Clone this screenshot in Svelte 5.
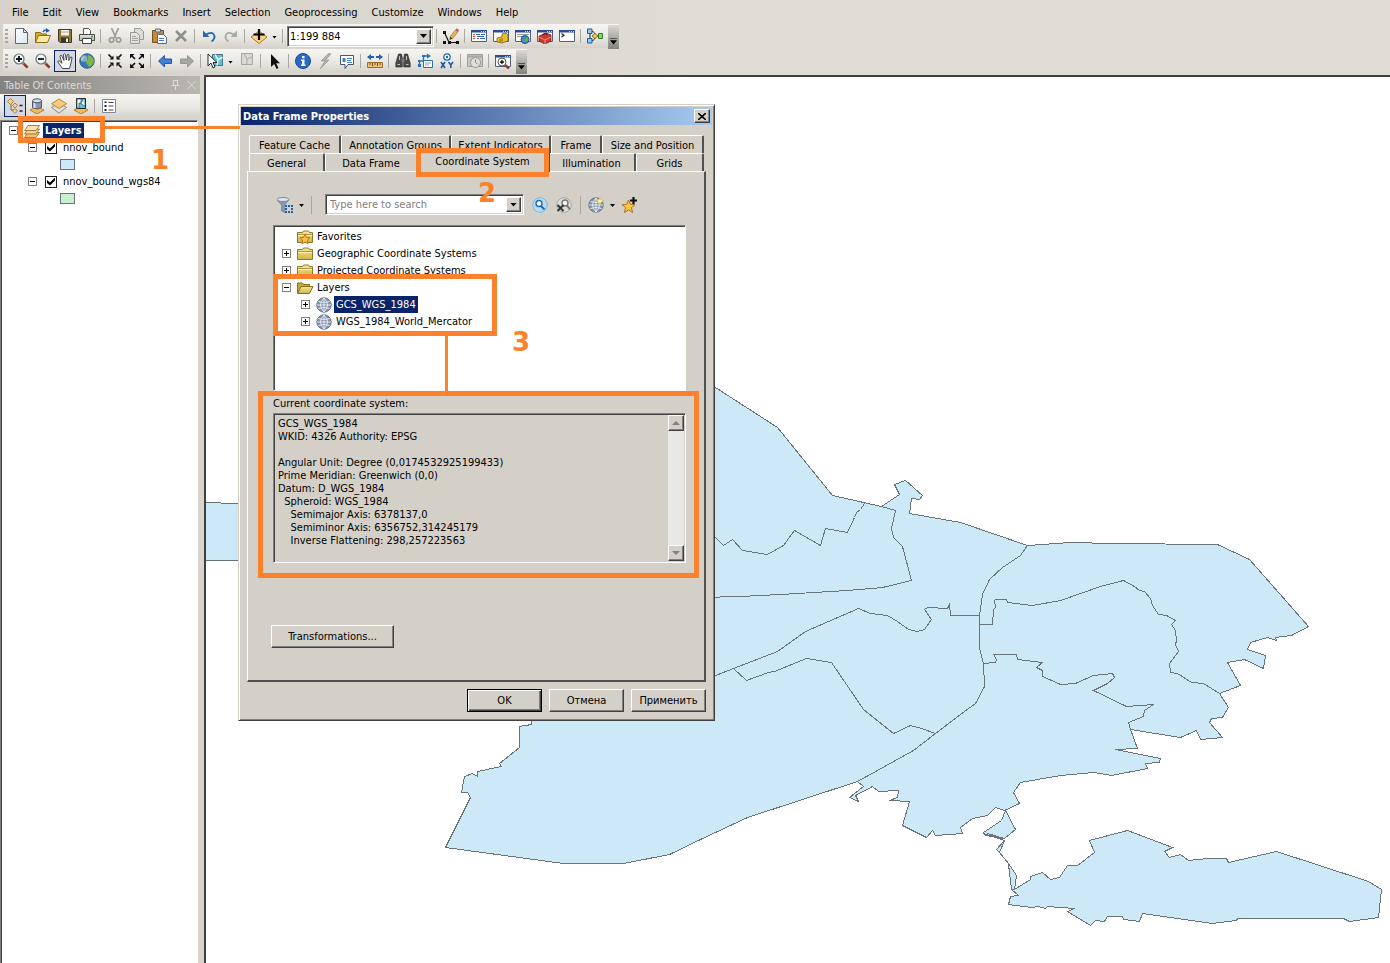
<script>
  const menus = ['File', 'Edit', 'View', 'Bookmarks', 'Insert', 'Selection', 'Geoprocessing', 'Customize', 'Windows', 'Help'];

  const lens = '<circle cx="6" cy="6" r="5" fill="#f2f6fa" stroke="#6d747c" stroke-width="1.2"/><path d="M10 10l4.6 4.6" stroke="#8c3b2a" stroke-width="2.600"/><path d="M9.4 9.4l1.6 1.6" stroke="#888" stroke-width="2"/>';
  const win = '<path d="M0 2h16v12H0z" fill="#fff" stroke="none"/><path d="M.5 2.5h15v11H.5z" fill="none" stroke="#4f5f7d"/><path d="M0 2h16v2.500H0z" fill="#2a4b92"/><path d="M10 3.500h1M12 3.500h1M14 3.500h1" stroke="#c9d6f0"/>';
  const diamond = '<path d="M8 8.5l7 3.5-7 4-7-4z" fill="#f2bd58" stroke="#a07020" stroke-width=".8"/>';
  const globe = '<circle cx="8" cy="8" r="7.2" fill="#8290a5" stroke="#68778e"/><path d="M1 8h14M8 1v14M2.2 4.5q5.8 2 11.6 0M2.2 11.5q5.8-2 11.6 0M8 1q-7 7 0 14M8 1q7 7 0 14" fill="none" stroke="#edf2f8" stroke-width=".9"/>';
  const folder = '<path d="M.5 3.5h5l1-1.5h5l1 1.5h3v10H.5z" fill="url(#manila)" stroke="#8d7a22"/><path d="M1 6.5h14" stroke="#fff2a8"/><path d="M1 5.500h14" stroke="#a18a30" stroke-width=".8"/>';

  const icons = {
    new: '<path d="M2.5.5h8l4 4v11h-12z" fill="url(#paper)" stroke="#56697f"/><path d="M10.500 .5v4h4z" fill="#d5e0ee" stroke="#56697f"/>',
    open: '<path d="M.5 14.500V4.500h5l1 1.500h5v2" fill="#d9a92f" stroke="#8a6a14"/><path d="M.5 14.500l3-7h12l-3 7z" fill="#ffe9a5" stroke="#8a6a14"/><path d="M8 4q1-2.500 4-2" fill="none" stroke="#1d5ca8" stroke-width="1.500"/><path d="M11 0l4 2.700-4 2z" fill="#1d5ca8"/>',
    save: '<path d="M1.500 1.500h13v13H3l-1.500-1.500z" fill="#8f7b35" stroke="#423b2c"/><path d="M4 2h8v5.500H4z" fill="#f3f1e6"/><path d="M4 4h8" stroke="#b9b49c"/><path d="M4 9.500h8V14H4z" fill="#3a3832"/><path d="M9 10.500h2V14H9z" fill="#f0eee2"/>',
    print: '<path d="M4.500 6V.5h5l2 2V6" fill="#fff" stroke="#555"/><path d="M.5 6.500h15v6H.5z" fill="#c6c6bd" stroke="#4c4c4c"/><path d="M1 8h14" stroke="#eee"/><path d="M3.500 10.500h9v5h-9z" fill="#fff" stroke="#444"/><path d="M12 8.500h2" stroke="#34a032" stroke-width="1.500"/>',
    cut: '<path d="M4.500 0l4.500 10M11.500 0L7 10" stroke="#a0a09c" stroke-width="1.800"/><circle cx="4.500" cy="12" r="2.200" fill="none" stroke="#989894" stroke-width="1.600"/><circle cx="11.500" cy="12" r="2.200" fill="none" stroke="#989894" stroke-width="1.600"/>',
    copy: '<path d="M5.500.5h6l3 3v8h-9z" fill="#dddcd7" stroke="#9a9a96"/><path d="M1.500 4.500h6l3 3v8h-9z" fill="#e2e1dc" stroke="#9a9a96"/><path d="M3 8.500h4M3 10.500h6M3 12.500h6" stroke="#a3a39f"/>',
    paste: '<path d="M1.500 2.500h11v12h-11z" fill="#c8893a" stroke="#74501f"/><path d="M4.500 1h5v3h-5z" fill="#d9d9d9" stroke="#666"/><path d="M6.500 6.500h6l3 3v6h-9z" fill="#fff" stroke="#4d6a90"/><path d="M8 10.500h5M8 12.500h5" stroke="#3f77c0"/>',
    del: '<path d="M3 3l10 10M13 3L3 13" stroke="#8d8d89" stroke-width="2.600"/>',
    undo: '<path d="M5 6.500q7-4 8.500 1.500q.5 3-3 5.500" fill="none" stroke="#2767b1" stroke-width="1.800"/><path d="M2 2.500v6.500h6.500z" fill="#2767b1"/>',
    redo: '<path d="M11 6.500Q4 2.500 2.500 8q-.5 3 3 5.500" fill="none" stroke="#a8a8a4" stroke-width="1.800"/><path d="M14 2.500v6.500H7.500z" fill="#a8a8a4"/>',
    add: '<path d="M8 3l8 6-8 6.500L0 9z" fill="#fbd48a" stroke="#a8782a"/><path d="M8 1v11M2.500 6.500h11" stroke="#000" stroke-width="2.200"/>',
    edit: '<path d="M1.500 4.500l4.500 10h8" fill="none" stroke="#111" stroke-width="1.200"/><path d="M0 3h3v3H0zM0 13h3v3H0zM5 13h3v3H5zM13 13h3v3h-3z" fill="#111"/><path d="M7 9l5.500-7 2.500 1.700L9.500 10.500z" fill="#e7bd59" stroke="#8a6a2c" stroke-width=".7"/><path d="M12.500 2l1.200-1.700L16 2l-1 1.700z" fill="#c0524a"/><path d="M7 9l-.5 3 3-1.500z" fill="#333"/>',
    toc: win + '<path d="M2 6.500h2M2 8.500h2M2 10.500h2M6 10.500h2" stroke="#c14a3a"/><path d="M5 6.500h4M10 6.500h4M6 8.500h7M9 10.500h5" stroke="#2d66b8"/>',
    catalog: win + '<path d="M4 10l5-1V6l4-1 2 2v6l-6 2-5-1z" fill="#e8c02e" stroke="#7d6412" stroke-width=".8"/><path d="M6 11l4-1v3.500l-4 1z" fill="#b48e17"/>',
    search: win + '<path d="M2 6.500h12M2 8.500h6" stroke="#999"/><circle cx="10" cy="11.500" r="4" fill="#3b8bc9" stroke="#24518b"/><path d="M7 10q3 3 5-1 2 2 1 4-3 2-4 0z" fill="#5fb04c"/>',
    toolbox: win + '<path d="M2 8l7-3 5 2v6l-6 3-6-3z" fill="#cc3a2e" stroke="#7a1a14" stroke-width=".8"/><path d="M2 9l6 3 6-3M8 12v4" fill="none" stroke="#f0a096" stroke-width=".8"/><path d="M6 7q2-3 4 0" fill="none" stroke="#5a120c" stroke-width="1.200"/>',
    python: win + '<path d="M2.500 5.500l2.500 1.700-2.500 1.800" fill="none" stroke="#222" stroke-width="1.200"/>',
    model: '<path d="M3 5v6M5 3.500q3 0 3 4.500M5 12.500q3 0 3-4.500h3" fill="none" stroke="#222"/><path d="M.5 1h4.500v4.500H.5zM.5 10.500h4.500V15H.5z" fill="#8ccbf2" stroke="#1f5f9e"/><path d="M5 8l3-2.500L11 8l-3 2.500z" fill="#f7d356" stroke="#8a6a14"/><path d="M11.500 5.500h4v5h-4z" fill="#92d36d" stroke="#2e7d26"/>',
    zoomin: lens + '<path d="M6 3v6M3 6h6" stroke="#111" stroke-width="1.800"/>',
    zoomout: lens + '<path d="M3 6h6" stroke="#111" stroke-width="1.800"/>',
    hand: '<path d="M5.500 15.500L1 9.200q-.5-1.700 1.200-1.400L5 10.300 3 3.500q.2-1.700 1.600-1L7 7.500 6.500 1.500q.7-1.500 1.900 0l.9 5.500 1-5.300q1-1 1.700.3l-.3 5.700 1.800-3.500q1.400-.7 1.500.8L13.700 11l-1.200 4.500z" fill="#fff" stroke="#333" stroke-width=".9"/>',
    earth: '<circle cx="8" cy="8" r="7.300" fill="#3279b8" stroke="#274e80" stroke-width=".8"/><path d="M9 2q5 1 6 6-1 5-5 6-1-2-3-4 0-3 2-4-1-2 0-4zM2 6q2-3 4-3-1 3-4 6z" fill="#7fb44e"/><circle cx="5" cy="5.500" r="3.200" fill="#fff" opacity=".4"/>',
    shrink: '<path d="M1.500 1.500l3 3M14.500 1.500l-3 3M1.500 14.500l3-3M14.500 14.500l-3-3" stroke="#111" stroke-width="1.700"/><path d="M6.500 2.500v4h-4zM9.500 2.500v4h4zM6.500 13.500v-4h-4zM9.500 13.500v-4h4z" fill="#111"/>',
    grow: '<path d="M3 3l3 3M13 3l-3 3M3 13l3-3M13 13l-3-3" stroke="#111" stroke-width="1.700"/><path d="M1 5.500V1h4.500zM15 5.500V1h-4.500zM1 10.500V15h4.500zM15 10.500V15h-4.500z" fill="#111"/>',
    back: '<path d="M1.500 8l6-5.500V6h7v4.500h-7V14z" fill="#3f7fd8" stroke="#1b4da0" stroke-width=".9"/>',
    forward: '<path d="M14.500 8l-6-5.500V6h-7v4.500h7V14z" fill="#a6a6a2" stroke="#90908c" stroke-width=".9"/>',
    select: '<path d="M5.500 1.500h10v11h-10z" fill="#58c4d8" stroke="#45707c"/><path d="M8 1.500l3 5 4.500-2M11 6.500l-1 6" fill="none" stroke="#fff" stroke-width="1.400"/><path d="M1 1v12l3-3 2 5 2-1-2-4.500h4z" fill="#fff" stroke="#111" stroke-width=".9"/>',
    clear: '<path d="M2.500.5h11v11h-11z" fill="#dbd9d4" stroke="#a7a6a1"/><path d="M5 1l3 5 5-2M8 6v5" fill="none" stroke="#aaa9a4"/>',
    pointer: '<path d="M4 1v13l3.200-3 2.300 5 2-1-2.300-4.700H13z" fill="#111"/>',
    info: '<circle cx="8" cy="8" r="7.500" fill="#2869c3" stroke="#194a94"/><path d="M7 3h2.500v2.300H7zM6 6.500h3.500v5h1V13H6v-1.500h1V8H6z" fill="#fff"/>',
    bolt: '<path d="M12 0L4 8h4l-5 8 9-9H8.500L14 1z" fill="#b1b0ac" stroke="#8f8e8a" stroke-width=".6"/>',
    popup: '<path d="M1.500 2.500h13v9H9l-3 4v-4H1.500z" fill="#fff" stroke="#47576a"/><path d="M3.500 5h3v4h-3z" fill="#3b80c8"/><path d="M8 5.500h5M8 7.500h4M8 9.500h5" stroke="#3b80c8"/>',
    measure: '<path d="M0 4l4-3v2h3v2H4v2zM16 4l-4-3v2H9v2h3v2z" fill="#1f63ad"/><path d="M.5 9.500h15v5H.5z" fill="#e9bf7a" stroke="#9a6a2a"/><path d="M3 10v2M5.500 10v3M8 10v2M10.500 10v3M13 10v2" stroke="#7b5320"/>',
    find: '<path d="M3.500 1h3l.8 4v9H.8v-4zM12.500 1h-3l-.8 4v9h6.500v-4z" fill="#4a4a4a" stroke="#222" stroke-width=".6"/><path d="M6.500 6h3v3h-3z" fill="#777"/><path d="M2.500 11.500h2.500M11 11.500h2.500M4.500 3v4M11.500 3v4" stroke="#c0c0c0"/>',
    route: '<path d="M2.500 12V8h4V3h5" fill="none" stroke="#2b6fae" stroke-width="1.300"/><path d="M10 .5L14 3l-4 2.500zM1 11h3v3H1zM5 2h3v2H5zM1 7h2v2H1z" fill="#2b6fae"/><path d="M6.500 7.500h9v7h-9z" fill="#fff" stroke="#2b6fae"/><path d="M8 10h6M8 12h4" stroke="#7aa5cf"/>',
    xy: '<circle cx="8" cy="4" r="3.200" fill="#fff" stroke="#1d6cb4" stroke-width="1.300"/><circle cx="8" cy="4" r="1.200" fill="#1d6cb4"/><path d="M2 9l4 6M6 9l-4 6M9.500 9l2.300 3L14 9M11.800 12v3" fill="none" stroke="#1d5ca0" stroke-width="1.600"/>',
    time: '<path d="M.5 1.500h15v12H.5z" fill="#c9c8c4" stroke="#a09f9b"/><path d="M1 3.500h14" stroke="#aaa9a5" stroke-width="2"/><circle cx="8.500" cy="9.500" r="5" fill="#e0dfdb" stroke="#969591"/><path d="M8.500 6.500v3l2 1.500" fill="none" stroke="#8a8985"/>',
    viewer: win + '<circle cx="7" cy="9" r="4" fill="#fff" stroke="#555"/><path d="M7 7v4M5 9h4" stroke="#111" stroke-width="1.300"/><path d="M10 12l4 3.500" stroke="#8c3b2a" stroke-width="2.400"/>',
    byorder: '<path d="M4 4v8h6M6 7.500h4" fill="none" stroke="#8a6a2c"/><path d="M3.500.5L6.500 3.500 3.500 6.500.5 3.500zM8 5l2.500 2.500L8 10 5.500 7.500zM8 10.500l2.500 2.500L8 15.500 5.500 13z" fill="#f6d08a" stroke="#9c7020" stroke-width=".8"/><path d="M12.500 7.500h3M12.500 13h3" stroke="#222" stroke-width="1.500"/>',
    bysource: diamond + '<path d="M3.500 3q4.500-3.500 9 0v6.500q-4.500 3-9 0z" fill="#8998b0" stroke="#4a5870"/><path d="M5.500 4v6" stroke="#d7dfea" stroke-width="2"/><ellipse cx="8" cy="2.800" rx="4.500" ry="2" fill="#d7dfea" stroke="#4a5870"/>',
    byvis: '<path d="M8 5l7.500 4.500L8 15 .5 9.500z" fill="#e4e2dc" stroke="#77756c" stroke-width=".8"/><path d="M8 1l7.500 4.700L8 10.500.5 5.700z" fill="#f7cc7a" stroke="#a07426" stroke-width=".8"/>',
    bysel: diamond + '<path d="M3.500.5h9v10h-9z" fill="#58c4d8" stroke="#222"/><path d="M4 1h4v4H6v5H4zM10 1l-2 5 4 2" fill="#fff" stroke="#385e68" stroke-width=".8"/>',
    options: '<path d="M1.500 1.500h13v13h-13z" fill="#fff" stroke="#7d8898"/><path d="M3.500 3.500h2v1.500h-2zM3.500 7h2v2h-2zM3.500 11h2v2h-2z" fill="#223"/><path d="M7.500 4.500h5M7.500 8h5M7.500 12h5" stroke="#445"/>',
    layers: '<path d="M4 9.500h11.500l-3.500 5H.5z" fill="#f0c074" stroke="#8a6426" stroke-width=".8"/><path d="M4 6h11.500l-3.500 5H.5z" fill="#f6d193" stroke="#8a6426" stroke-width=".8"/><path d="M4 2.500h11.500l-3.500 5H.5z" fill="#fbe0b0" stroke="#8a6426" stroke-width=".8"/>',
    filter: '<path d="M0 3l4.500 5v6l3 1.500V8L12 3q-6 2.500-12 0z" fill="#8598ac" stroke="#66798e" stroke-width=".6"/><ellipse cx="6" cy="2.500" rx="6" ry="2" fill="#dfe6ee" stroke="#66798e" stroke-width=".8"/><path d="M8 8h2v2H8zM11 8h2v2h-2zM14 8h2v2h-2zM8 11h2v2H8zM14 11h2v2h-2zM8 14h2v2H8zM11 14h2v2h-2zM14 14h2v2h-2z" fill="#1c63ac"/>',
    find2: '<circle cx="8" cy="8" r="7.300" fill="#b7ddf4" stroke="#7cb8df"/><circle cx="7" cy="6.500" r="3" fill="#fff" stroke="#1c6cb0" stroke-width="1.400"/><path d="M9 9l3.500 3.500" stroke="#1c6cb0" stroke-width="2"/>',
    nofind: '<circle cx="8" cy="8" r="7.300" fill="#dcdcda" stroke="#a5a5a2"/><circle cx="9" cy="6" r="3" fill="#f4f4f4" stroke="#777" stroke-width="1.400"/><path d="M11 8.500l3 4" stroke="#777" stroke-width="2"/><path d="M1.500 8l6 6M7.500 8l-6 6" stroke="#333" stroke-width="1.900"/>',
    newglobe: globe + '<path d="M12 0l1 2.800L16 4l-3 1.200L12 8l-1-2.800L8 4l3-1.200z" fill="#fff4a3" stroke="#c9b24a" stroke-width=".5"/>',
    favadd: '<path d="M6.500 3l1.800 4.300 4.700.4-3.600 3 1.200 4.800-4.100-2.600-4.100 2.600 1.200-4.800L0 7.700l4.700-.4z" fill="#fbc740" stroke="#a56a14" stroke-width=".9"/><path d="M11.500 0v7M8 3.500h7" stroke="#111" stroke-width="2.200"/>',
    folder,
    openfolder: '<path d="M.5 13.500V3h5l1 1.500h6V7" fill="#c4a840" stroke="#857018"/><path d="M.5 13.500L4 6.500h12l-3.500 7z" fill="url(#manila)" stroke="#857018"/>',
    favfolder: folder + '<path d="M8 5l1.500 3.300 3.500.4-2.600 2.400.7 3.700L8 13l-3.100 1.800.7-3.700L3 8.700l3.500-.4z" fill="#ffc04a" stroke="#b4600c" stroke-width=".8"/>',
    globe
  };

  const standard1 = [['new', 'New'], ['open', 'Open'], ['save', 'Save'], ['print', 'Print'], null, ['cut', 'Cut'], ['copy', 'Copy'], ['paste', 'Paste'], ['del', 'Delete'], null, ['undo', 'Undo'], ['redo', 'Redo'], null, ['add', 'Add Data', 'menu'], null];
  const standard2 = [null, ['edit', 'Editor Toolbar'], null, ['toc', 'Contents window'], ['catalog', 'Catalog window'], ['search', 'Search window'], ['toolbox', 'ArcToolbox window'], ['python', 'Python window'], null, ['model', 'ModelBuilder']];
  const tools = [['zoomin', 'Zoom In'], ['zoomout', 'Zoom Out'], ['hand', 'Pan', 'on'], ['earth', 'Full Extent'], null, ['shrink', 'Fixed Zoom In'], ['grow', 'Fixed Zoom Out'], null, ['back', 'Go Back'], ['forward', 'Go Forward'], null, ['select', 'Select Features', 'menu'], ['clear', 'Clear Selection'], null, ['pointer', 'Select Elements'], null, ['info', 'Identify'], ['bolt', 'Hyperlink'], ['popup', 'HTML Popup'], null, ['measure', 'Measure'], null, ['find', 'Find'], ['route', 'Find Route'], ['xy', 'Go To XY'], null, ['time', 'Time Slider'], null, ['viewer', 'Viewer Window']];
  const tocTools = [['byorder', 'List By Drawing Order', 'on'], ['bysource', 'List By Source'], ['byvis', 'List By Visibility'], ['bysel', 'List By Selection'], null, ['options', 'Options']];

  let layers = $state([
    { name: 'nnov_bound', shown: true, color: '#cde8f6' },
    { name: 'nnov_bound_wgs84', shown: true, color: '#c8f0cc' }
  ]);

  const backTabs = ['Feature Cache', 'Annotation Groups', 'Extent Indicators', 'Frame', 'Size and Position'];
  const frontTabs = ['General', 'Data Frame', 'Coordinate System', 'Illumination', 'Grids'];
  let active = $state('Coordinate System');

  const systems = [
    { name: 'Favorites', icon: 'favfolder', sign: '' },
    { name: 'Geographic Coordinate Systems', icon: 'folder', sign: '+' },
    { name: 'Projected Coordinate Systems', icon: 'folder', sign: '+' },
    { name: 'Layers', icon: 'openfolder', sign: '-' },
    { name: 'GCS_WGS_1984', icon: 'globe', sign: '+', child: true },
    { name: 'WGS_1984_World_Mercator', icon: 'globe', sign: '+', child: true }
  ];
  let chosen = $state('GCS_WGS_1984');
  let scale = $state('1:199 884');
  let query = $state('');

  const details = `GCS_WGS_1984
WKID: 4326 Authority: EPSG

Angular Unit: Degree (0,0174532925199433)
Prime Meridian: Greenwich (0,0)
Datum: D_WGS_1984
  Spheroid: WGS_1984
    Semimajor Axis: 6378137,0
    Semiminor Axis: 6356752,314245179
    Inverse Flattening: 298,257223563`;

  const areas = [
    '715,387 777,427 832,495 881,506 899,494 894,484 905,480 922,495 919,499 911,498 909,513 960,522 1027,545 1070,542 1112,543 1217,544 1249,559 1308,626 1291,635 1275,637 1276,640 1267,637 1250,642 1247,649 1265,655 1263,668 1244,659 1227,662 1240,685 1219,693 1228,707 1222,717 1211,718 1209,722 1222,737 1200,739 1196,730 1180,737 1130,729 1137,748 1115,749 1160,758 1159,762 1145,763 1147,768 1111,775 1093,772 1060,775 1020,782 1013,792 1019,803 1004,810 995,807 987,815 972,818 960,827 962,833 935,835 932,830 926,837 902,825 909,801 889,800 897,797 898,790 878,791 872,786 855,795 858,801 849,797 863,786 857,781 747,817 700,839 669,854 623,863 563,863 445,847 470,797 467,792 461,792 464,776 472,773 477,776 477,771 501,766 499,763 519,747 519,726 531,724 531,600 600,450',
    '200,502 240,503 300,504 300,560 200,560',
    '1005,810 1015,829 1004,838 985,835 983,832 1001,820',
    '1004,840 999,852 996,849',
    '1008,863 1016,875 1014,889 1011,889',
    '1014,889 1030,879 1030,876 1042,872 1050,879 1059,877 1067,865 1077,865 1094,852 1089,840 1127,830 1172,847 1164,851 1169,857 1180,854 1188,860 1208,858 1226,858 1228,862 1276,851 1368,881 1381,889 1378,917 1349,921 1343,918 1237,918 1236,920 1212,923 1142,913 1139,921 1123,919 1122,916 1107,916 1104,921 1095,920 1090,925 1067,911 1074,908 1047,906 1045,908 1038,906 1031,907 1008,904 1010,896 1018,895 1011,889'
  ];
  const borders = [
    '700,520 715,537 723,545 732,539 742,550 767,554 783,545 794,530 820,545 825,528 847,532 854,517 856,512 860,509 864,503',
    '881,506 895,510 891,528 893,537 902,546 911,580 882,587 847,590 780,594 740,596 700,597',
    '1027,545 1020,555 1002,567 989,579 982,594 979,615 979,647 983,663 984,686 975,703 960,714 935,733 913,750 857,781',
    '979,615 950,615 949,604 947,608 927,607 924,609 931,619 924,629 917,631 908,629 897,621 887,615 870,613 858,608 805,631 777,651 733,668 700,681',
    '733,668 746,680 768,672 774,671 806,658 831,662 863,709 893,733 910,725 921,728 935,733',
    '979,624 992,624 993,609 995,607 994,600 995,599 1006,599 1007,602 1032,605 1060,600 1100,586 1123,580 1134,586 1139,590 1144,591 1150,598 1152,605 1158,614 1166,615 1175,620 1171,624 1175,630 1176,640 1175,644 1178,651 1169,663 1170,672 1177,673 1191,682 1203,683 1219,693',
    '983,663 995,662 996,659 993,654 1016,654 1017,659 1042,662 1036,667 1042,670 1042,676 1060,684 1075,683 1093,675 1112,673 1114,677 1107,683 1093,690 1126,706 1153,704 1144,710 1143,716 1128,722 1130,729',
    '983,833 1004,840 987,833 1004,838',
    '999,852 1008,863 1008,868'
  ];
</script>

{#snippet icon(name)}
  <svg class="icon" viewBox="0 0 16 16" aria-hidden="true">{@html icons[name]}</svg>
{/snippet}

{#snippet tool(items)}
  {#each items as item}
    {#if item}
      <button class="tool" class:on={item[2] === 'on'} aria-label={item[1]}>{@render icon(item[0])}</button>
      {#if item[2] === 'menu'}<button class="drop" aria-label="{item[1]} options"></button>{/if}
    {:else}
      <span class="sep"></span>
    {/if}
  {/each}
{/snippet}

{#snippet expander(sign)}
  <span class="expander" class:none={!sign} class:plus={sign === '+'}></span>
{/snippet}

{#snippet tabRow(names, extra)}
  <div class="tabs {extra}" role="tablist">
    {#each names as name}
      <button role="tab" class:active={active === name} aria-selected={active === name} onclick={() => (active = name)}>{name}</button>
    {/each}
  </div>
{/snippet}

<div class="app">
  <svg class="defs" aria-hidden="true">
    <linearGradient id="paper" x2="1" y2="1"><stop offset="0" stop-color="#fff" /><stop offset="1" stop-color="#dbe7f5" /></linearGradient>
    <linearGradient id="manila" x2="0" y2="1"><stop offset="0" stop-color="#f4e69a" /><stop offset="1" stop-color="#d0b448" /></linearGradient>
  </svg>

  <nav class="menu">
    {#each menus as item}<button>{item}</button>{/each}
  </nav>

  <div class="toolbar">
    <span class="grip"></span>
    {@render tool(standard1)}
    <div class="combo scale">
      <input type="text" aria-label="Map scale" bind:value={scale} />
      <button aria-label="Scale list"></button>
    </div>
    {@render tool(standard2)}
    <button class="cap" aria-label="Toolbar options"></button>
  </div>
  <div class="toolbar">
    <span class="grip"></span>
    {@render tool(tools)}
    <button class="cap" aria-label="Toolbar options"></button>
  </div>

  <main>
    <aside>
      <header>
        <h2>Table Of Contents</h2>
        <button aria-label="Auto hide"><svg viewBox="0 0 9 10"><path d="M2.500 0v5.500M6.500 0v5.500M2 .5h5M.5 5.500h8M4.500 6v4" /></svg></button>
        <button aria-label="Close contents"><svg viewBox="0 0 9 10"><path d="M.5 1l8 8M8.500 1l-8 8" /></svg></button>
      </header>
      <div class="toctools">{@render tool(tocTools)}</div>
      <div class="toc">
        <div class="row">{@render expander('-')}{@render icon('layers')}<b>Layers</b></div>
        {#each layers as layer}
          <div class="row child">
            {@render expander('-')}
            <label><input type="checkbox" bind:checked={layer.shown} />{layer.name}</label>
          </div>
          <div class="row"><i class="swatch" style:background={layer.color}></i></div>
        {/each}
      </div>
    </aside>

    <section class="map" aria-label="Map">
      <svg viewBox="206 77 1184 886" preserveAspectRatio="xMinYMin slice" aria-hidden="true">
        <g transform="translate(.5 .5)" shape-rendering="crispEdges" stroke="#68737a">
          {#each areas as points}<polygon {points} fill="#cde8f6" />{/each}
          {#each borders as points}<polyline {points} fill="none" />{/each}
        </g>
      </svg>
    </section>
  </main>

  <div class="dialog" role="dialog" aria-label="Data Frame Properties">
    <div class="title">
      <h1>Data Frame Properties</h1>
      <button aria-label="Close"><svg viewBox="0 0 8 7"><path d="M0 0l8 7M8 0L0 7" /></svg></button>
    </div>
    <div class="body">
      {@render tabRow(backTabs, 'rear')}
      {@render tabRow(frontTabs, 'front')}
      <div class="panel">
        <div class="find">
          <button class="tool" aria-label="Filter">{@render icon('filter')}</button>
          <button class="drop" aria-label="Filter options"></button>
          <span class="sep"></span>
          <div class="combo">
            <input type="text" aria-label="Search" placeholder="Type here to search" bind:value={query} />
            <button aria-label="Recent searches"></button>
          </div>
          <button class="tool" aria-label="Search">{@render icon('find2')}</button>
          <button class="tool" aria-label="Clear search">{@render icon('nofind')}</button>
          <span class="sep"></span>
          <button class="tool" aria-label="Add coordinate system">{@render icon('newglobe')}</button>
          <button class="drop" aria-label="Add coordinate system options"></button>
          <button class="tool" aria-label="Add to favorites">{@render icon('favadd')}</button>
        </div>
        <div class="systems" role="tree">
          {#each systems as s}
            <div class="row" class:child={s.child} role="treeitem" aria-selected={chosen === s.name}>
              {@render expander(s.sign)}{@render icon(s.icon)}
              <button class:picked={chosen === s.name} onclick={() => (chosen = s.name)}>{s.name}</button>
            </div>
          {/each}
        </div>
        <label class="caption" for="current">Current coordinate system:</label>
        <div class="current">
          <textarea id="current" readonly value={details}></textarea>
          <div class="scroll">
            <button class="up" aria-label="Scroll up"></button>
            <button class="down" aria-label="Scroll down"></button>
          </div>
        </div>
        <button class="push wide">Transformations...</button>
      </div>
      <footer>
        <button class="push default">OK</button>
        <button class="push">Отмена</button>
        <button class="push">Применить</button>
      </footer>
    </div>
  </div>

  <div class="mark m1"></div>
  <div class="line l1"></div>
  <strong class="n1">1</strong>
  <div class="mark m2"></div>
  <strong class="n2">2</strong>
  <div class="mark m3"></div>
  <div class="line l3"></div>
  <strong class="n3">3</strong>
  <div class="mark m4"></div>
</div>

<style>
  :global(body) { margin: 0; background: #d4d0c8; }
  .app {
    position: relative;
    display: flex;
    flex-direction: column;
    min-height: 100vh;
    background: linear-gradient(90deg, #d6d2ca, #dfdcd5 50%);
    color: #000;
    font: 11px/13px "DejaVu Sans Condensed", "Noto Sans", sans-serif;
  }
  .app :global(*) { box-sizing: border-box; }
  button, input, textarea { font: inherit; color: inherit; margin: 0; padding: 0; border: 0; border-radius: 0; background: none; outline: 0; }
  h1, h2 { margin: 0; font: inherit; }
  .defs { position: absolute; width: 0; height: 0; }
  .icon { display: block; flex: none; width: 16px; height: 16px; }

  .menu { display: flex; gap: 14px; height: 24px; padding: 0 12px; }

  .toolbar { display: flex; align-items: center; align-self: flex-start; height: 24px; margin: 0 0 1px 3px; background: linear-gradient(#f6f5f2, #e9e7e2 55%, #d5d2ca); }
  .grip { width: 3px; height: 15px; margin: 0 2px; background: repeating-linear-gradient(#aaa79f 0 2px, transparent 2px 4px); }
  .tool { display: grid; place-items: center; flex: none; width: 22px; height: 22px; }
  .tool.on { border: 1px solid #0a246a; background: #d3d7e3; }
  .drop { flex: none; width: 10px; height: 20px; padding: 2px 0 0 2px; }
  .drop::before, .combo button::before { content: ""; display: block; width: 7px; height: 4px; background: #000; clip-path: polygon(0 0, 100% 0, 50% 100%); }
  .drop::before { width: 5px; height: 3px; }
  .sep { flex: none; width: 6px; height: 14px; background: linear-gradient(#aaa79f, #aaa79f) 2px 0 / 1px 100% no-repeat; }
  .cap { width: 11px; height: 24px; margin: 2px 0 0 2px; background: linear-gradient(#dcd9d3, #84827d); }
  .cap::before { content: ""; display: block; width: 7px; height: 7px; margin: 8px 0 0 2px; background: #000; clip-path: polygon(0 0, 100% 0, 100% 16%, 0 16%, 0 40%, 100% 40%, 50% 100%, 0 40%); }

  .combo { display: flex; height: 21px; border: 1px solid #808080; border-right-color: #fff; border-bottom-color: #fff; box-shadow: inset 1px 1px #404040, inset -1px -1px #d4d0c8; background: #fff; padding: 2px; }
  .combo input { flex: 1; min-width: 0; padding-left: 2px; }
  .combo input::placeholder { color: #808080; opacity: 1; }
  .combo button { display: grid; place-items: center; flex: none; width: 15px; }
  .combo button, .push, .scroll button, .title button { background: #d4d0c8; border: 1px solid; border-color: #fff #404040 #404040 #fff; box-shadow: inset -1px -1px #808080; }
  .scale { width: 147px; margin-left: 1px; }
  .scale input { padding-left: 0; }

  main { display: flex; flex: 1; margin-top: 1px; }
  aside { display: flex; flex-direction: column; flex: none; width: 200px; padding-top: 1px; }
  aside header { display: flex; align-items: center; height: 18px; padding: 0 1px 0 4px; background: linear-gradient(90deg, #84827f, #bab7b0); color: #dedbd4; }
  h2 { flex: 1; }
  aside header button { display: grid; place-items: center; width: 16px; height: 16px; }
  aside header svg { width: 9px; height: 10px; stroke: #dedbd4; fill: none; }
  .toctools { display: flex; align-items: center; height: 24px; padding-left: 4px; background: linear-gradient(#f6f5f2, #e9e7e2 55%, #d5d2ca); }
  .toc { flex: 1; margin: 2px 2px 0 0; padding: 1px 0 0 8px; border: 1px solid #808080; border-right-color: #fff; border-width: 1px 1px 0 1px; box-shadow: inset 1px 1px #404040; background: #fff; }
  .row { display: flex; align-items: center; height: 17px; }
  .toc .row .expander { margin-right: 6px; }
  .toc .row.child { padding-left: 19px; }
  .toc b { margin-left: 3px; padding: 1px 2px; background: #0a246a; color: #fff; }
  .toc label { display: flex; align-items: center; gap: 6px; }
  .toc label input { appearance: none; width: 12px; height: 12px; margin-left: 2px; border: 1px solid #222; background: #fff; }
  .toc label input:checked::before { content: ""; display: block; width: 8px; height: 8px; margin: 1px; background: #000; clip-path: polygon(0 30%, 37% 62%, 100% 0, 100% 36%, 37% 100%, 0 68%); }
  .swatch { width: 15px; height: 11px; margin-left: 51px; border: 1px solid #68737a; }
  .expander { flex: none; width: 9px; height: 9px; border: 1px solid #808080; background: linear-gradient(#000, #000) 1px 3px / 5px 1px no-repeat, #fff; }
  .expander.plus { background: linear-gradient(#000, #000) 1px 3px / 5px 1px no-repeat, linear-gradient(#000, #000) 3px 1px / 1px 5px no-repeat, #fff; }
  .expander.none { visibility: hidden; }

  .map { position: relative; flex: 1; min-width: 0; margin-left: 4px; border: solid #404040; border-width: 2px 0 0 2px; background: #fff; overflow: hidden; }
  .map svg { position: absolute; inset: 0; width: 100%; height: 100%; }

  .dialog { position: absolute; left: 238px; top: 104px; width: 477px; padding: 1px; background: #d4d0c8; border: 1px solid; border-color: #d4d0c8 #404040 #404040 #d4d0c8; box-shadow: inset 1px 1px #fff, inset -1px -1px #808080; }
  .title { display: flex; align-items: center; height: 18px; margin: 1px; padding: 0 2px; background: linear-gradient(90deg, #0a246a, #a6caf0); color: #fff; font-weight: bold; }
  h1 { flex: 1; }
  .title button { display: grid; place-items: center; width: 16px; height: 14px; }
  .title svg { width: 8px; height: 7px; stroke: #000; stroke-width: 1.6; }
  .body { padding: 9px 7px 7px; }
  .tabs { display: grid; height: 18px; padding: 0 2px; }
  .rear { grid-template-columns: 92fr 110fr 100fr 51fr 102fr; }
  .front { grid-template-columns: 76fr 93fr 130fr 88fr 68fr; }
  .tabs button { border: solid; border-width: 1px 2px 0 1px; border-color: #fff #505050 #fff #fff; border-radius: 2px 2px 0 0; white-space: nowrap; padding-top: 1px; }
  .tabs .active { position: relative; margin: -2px -2px -1px; background: #d4d0c8; padding-bottom: 3px; }
  .panel { padding: 22px 18px 32px 23px; border: solid; border-width: 1px 2px 2px 1px; border-color: #fff #505050 #505050 #fff; }
  .find { display: flex; align-items: center; height: 21px; margin-left: 2px; }
  .find .tool { width: 24px; }
  .find .combo { width: 199px; margin: 0 4px 0 10px; }
  .find .sep { height: 18px; margin-left: 2px; }
  .systems { height: 166px; margin: 10px 0 6px 2px; padding: 2px 6px; border: 1px solid; border-color: #808080 #fff #fff #808080; box-shadow: inset 1px 1px #404040; background: #fff; }
  .systems .row { gap: 2px; white-space: nowrap; }
  .systems .row.child { padding-left: 19px; }
  .systems .expander { margin: 0 4px 0 2px; }
  .systems .row button { height: 17px; padding: 0 2px; }
  .systems .row .picked { background: #0a246a; color: #fff; }
  .caption { display: block; margin: 0 0 3px 2px; }
  .current { display: flex; height: 150px; margin-left: 2px; padding: 1px; border: 1px solid; border-color: #808080 #fff #fff #808080; box-shadow: inset 1px 1px #404040; }
  textarea { flex: 1; resize: none; overflow: hidden; padding: 2px 3px; white-space: pre; }
  .scroll { display: flex; flex-direction: column; justify-content: space-between; width: 16px; background: #eae8e4; }
  .scroll button { display: grid; place-items: center; height: 16px; }
  .scroll button::before { content: ""; width: 8px; height: 4px; background: #808080; clip-path: polygon(0 0, 100% 0, 50% 100%); }
  .scroll .up::before { clip-path: polygon(50% 0, 100% 100%, 0 100%); }
  .push { width: 75px; height: 23px; }
  .wide { display: block; width: 123px; margin-top: 62px; }
  .default { border-color: #000; box-shadow: inset 1px 1px #fff, inset -1px -1px #404040, inset -2px -2px #808080; }
  footer { display: flex; justify-content: flex-end; gap: 7px; margin-top: 7px; }

  .mark { position: absolute; border: 5px solid #fb812c; pointer-events: none; }
  .line { position: absolute; background: #fb812c; }
  strong { position: absolute; color: #fb812c; font: bold 26px/26px "DejaVu Sans", sans-serif; }
  .m1 { left: 18px; top: 116px; width: 87px; height: 27px; }
  .m2 { left: 416px; top: 148px; width: 133px; height: 29px; }
  .m3 { left: 273px; top: 274px; width: 224px; height: 62px; }
  .m4 { left: 258px; top: 391px; width: 441px; height: 187px; }
  .l1 { left: 105px; top: 126px; width: 135px; height: 3px; }
  .l3 { left: 445px; top: 336px; width: 3px; height: 55px; }
  .n1 { left: 151px; top: 147px; }
  .n2 { left: 478px; top: 180px; }
  .n3 { left: 512px; top: 329px; }
</style>
